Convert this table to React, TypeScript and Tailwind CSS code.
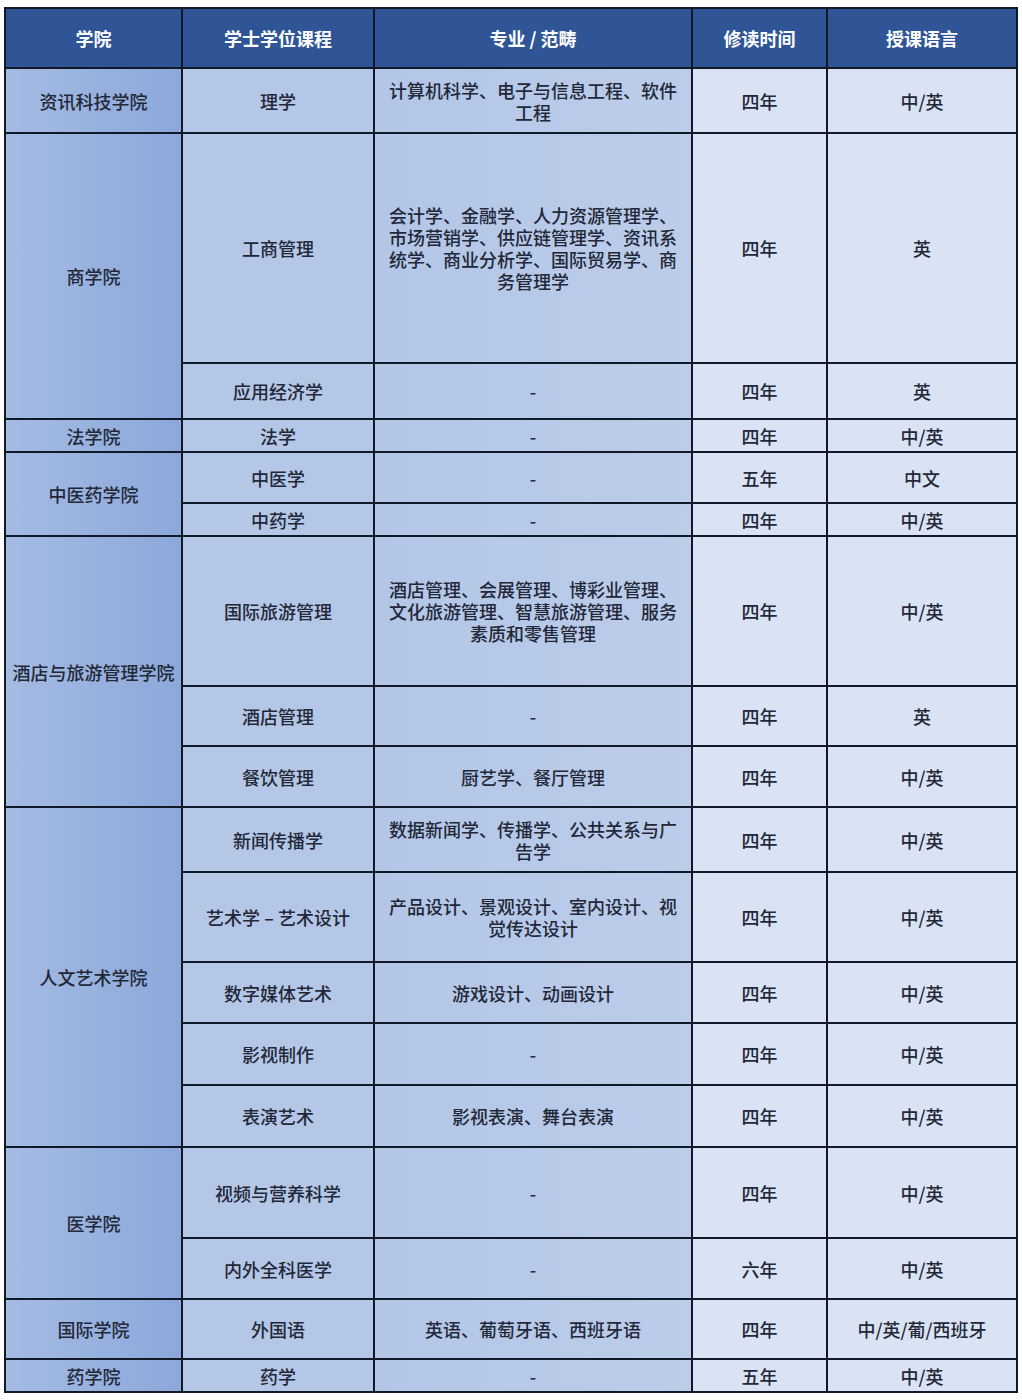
import React from 'react';

type Cell = { text: string; span?: number; col: number };

const colBg: Record<number, string> = {
  1: 'bg-gradient-to-r from-[#a4bbe3] to-[#8ca8da]',
  2: 'bg-[#b4c7e7]',
  3: 'bg-gradient-to-r from-[#b3c6e7] to-[#bccdea]',
  4: 'bg-[#dae3f3]',
  5: 'bg-[#dae3f3]',
};

const spanClass: Record<number, string> = {
  1: '',
  2: 'row-span-2',
  3: 'row-span-3',
  5: 'row-span-5',
};

const headers = ['学院', '学士学位课程', '专业 / 范畴', '修读时间', '授课语言'];

// each entry is one visual row; a college cell carries its row span
const rows: Cell[][] = [
  [
    { text: '资讯科技学院', col: 1 },
    { text: '理学', col: 2 },
    { text: '计算机科学、电子与信息工程、软件工程', col: 3 },
    { text: '四年', col: 4 },
    { text: '中/英', col: 5 },
  ],
  [
    { text: '商学院', col: 1, span: 2 },
    { text: '工商管理', col: 2 },
    { text: '会计学、金融学、人力资源管理学、市场营销学、供应链管理学、资讯系统学、商业分析学、国际贸易学、商务管理学', col: 3 },
    { text: '四年', col: 4 },
    { text: '英', col: 5 },
  ],
  [
    { text: '应用经济学', col: 2 },
    { text: '-', col: 3 },
    { text: '四年', col: 4 },
    { text: '英', col: 5 },
  ],
  [
    { text: '法学院', col: 1 },
    { text: '法学', col: 2 },
    { text: '-', col: 3 },
    { text: '四年', col: 4 },
    { text: '中/英', col: 5 },
  ],
  [
    { text: '中医药学院', col: 1, span: 2 },
    { text: '中医学', col: 2 },
    { text: '-', col: 3 },
    { text: '五年', col: 4 },
    { text: '中文', col: 5 },
  ],
  [
    { text: '中药学', col: 2 },
    { text: '-', col: 3 },
    { text: '四年', col: 4 },
    { text: '中/英', col: 5 },
  ],
  [
    { text: '酒店与旅游管理学院', col: 1, span: 3 },
    { text: '国际旅游管理', col: 2 },
    { text: '酒店管理、会展管理、博彩业管理、文化旅游管理、智慧旅游管理、服务素质和零售管理', col: 3 },
    { text: '四年', col: 4 },
    { text: '中/英', col: 5 },
  ],
  [
    { text: '酒店管理', col: 2 },
    { text: '-', col: 3 },
    { text: '四年', col: 4 },
    { text: '英', col: 5 },
  ],
  [
    { text: '餐饮管理', col: 2 },
    { text: '厨艺学、餐厅管理', col: 3 },
    { text: '四年', col: 4 },
    { text: '中/英', col: 5 },
  ],
  [
    { text: '人文艺术学院', col: 1, span: 5 },
    { text: '新闻传播学', col: 2 },
    { text: '数据新闻学、传播学、公共关系与广告学', col: 3 },
    { text: '四年', col: 4 },
    { text: '中/英', col: 5 },
  ],
  [
    { text: '艺术学 – 艺术设计', col: 2 },
    { text: '产品设计、景观设计、室内设计、视觉传达设计', col: 3 },
    { text: '四年', col: 4 },
    { text: '中/英', col: 5 },
  ],
  [
    { text: '数字媒体艺术', col: 2 },
    { text: '游戏设计、动画设计', col: 3 },
    { text: '四年', col: 4 },
    { text: '中/英', col: 5 },
  ],
  [
    { text: '影视制作', col: 2 },
    { text: '-', col: 3 },
    { text: '四年', col: 4 },
    { text: '中/英', col: 5 },
  ],
  [
    { text: '表演艺术', col: 2 },
    { text: '影视表演、舞台表演', col: 3 },
    { text: '四年', col: 4 },
    { text: '中/英', col: 5 },
  ],
  [
    { text: '医学院', col: 1, span: 2 },
    { text: '视频与营养科学', col: 2 },
    { text: '-', col: 3 },
    { text: '四年', col: 4 },
    { text: '中/英', col: 5 },
  ],
  [
    { text: '内外全科医学', col: 2 },
    { text: '-', col: 3 },
    { text: '六年', col: 4 },
    { text: '中/英', col: 5 },
  ],
  [
    { text: '国际学院', col: 1 },
    { text: '外国语', col: 2 },
    { text: '英语、葡萄牙语、西班牙语', col: 3 },
    { text: '四年', col: 4 },
    { text: '中/英/葡/西班牙', col: 5 },
  ],
  [
    { text: '药学院', col: 1 },
    { text: '药学', col: 2 },
    { text: '-', col: 3 },
    { text: '五年', col: 4 },
    { text: '中/英', col: 5 },
  ],
];

export default function App() {
  return (
    <div
      className="w-[1022px] h-[1400px] bg-white pt-[7px] pl-[4px]"
      style={{ fontFamily: '"Noto Sans CJK SC", "Liberation Serif", serif' }}
    >
      <div className="inline-grid grid-cols-[175px_190px_316px_133px_188px] grid-rows-[58px_63px_228px_54px_31px_49px_31px_148px_58px_59px_63px_88px_59px_60px_60px_89px_59px_58px_31px] gap-[2px] p-[2px] bg-[#111827]">
        {headers.map((h) => (
          <div
            key={h}
            className="flex items-center justify-center bg-[#2f5597] text-white text-[18px] font-bold"
          >
            {h}
          </div>
        ))}
        {rows.map((row, i) =>
          row.map((c, j) => (
            <div
              key={`${i}-${j}`}
              className={`flex items-center justify-center text-center text-[18px] leading-[22px] font-medium text-[#232838] ${colBg[c.col]} ${spanClass[c.span ?? 1]} ${c.col === 3 ? 'px-[8px]' : ''}`}
            >
              {c.text}
            </div>
          ))
        )}
      </div>
    </div>
  );
}
